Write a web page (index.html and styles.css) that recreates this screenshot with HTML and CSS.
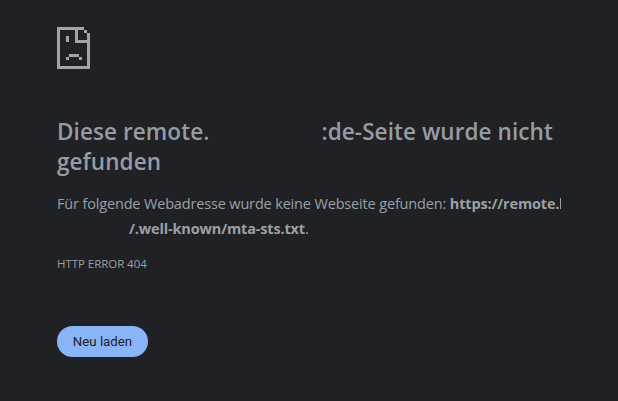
FILE: index.html
```html
<!DOCTYPE html>
<html lang="de">
<head>
<meta charset="utf-8">
<title>Seite nicht gefunden</title>
<link rel="stylesheet" href="styles.css">
</head>
<body>
<main class="page">
  <svg class="icon" width="33" height="42" viewBox="0 0 33 42" aria-hidden="true">
    <path class="icon-fill" d="M0 0H27V3H30V6H33V42H0ZM3 3V39H30V16H18V3ZM21 3V13H30V6H27V3Z" fill-rule="evenodd"/>
    <rect class="icon-fill" x="9" y="9" width="3" height="6"/>
    <path class="icon-fill" d="M12 27H22V30H25V33H22V30H12V33H9V30H12Z"/>
  </svg>
  <h1 class="title"><span>Diese remote.</span><span class="redact redact-title"></span><span>:de-Seite wurde nicht</span> <span>gefunden</span></h1>
  <p class="desc">Für folgende Webadresse wurde keine Webseite gefunden: <strong>https://remote.<span class="cut"></span><br><span class="redact redact-url"></span>/.well-known/mta-sts.txt</strong>.</p>
  <div class="code">HTTP ERROR 404</div>
  <button class="reload" type="button">Neu laden</button>
</main>
</body>
</html>
```
FILE: styles.css
```css
html, body {
  margin: 0;
  height: 100%;
  background: #202124;
}
.page {
  box-sizing: border-box;
  height: 401px;
  padding: 27px 57px 0;
  overflow: hidden;
  color: #9aa0a6;
  font-family: "Open Sans", "Noto Sans", sans-serif;
}
.icon {
  display: block;
}
.icon-fill {
  fill: #a4a4a4;
}
.title {
  margin: 48px 0 0;
  font-size: 22.5px;
  line-height: 30px;
  font-weight: 600;
  letter-spacing: 0.08px;
  color: #959ca3;
}
.redact {
  display: inline-block;
  height: 1px;
}
.redact-title {
  width: 112px;
}
.redact-url {
  width: 72px;
}
.desc {
  margin: 14px 0 0;
  font-size: 14.5px;
  line-height: 25px;
  letter-spacing: -0.16px;
  white-space: nowrap;
}
.desc strong {
  font-weight: 700;
}
.cut {
  display: inline-block;
  width: 1px;
  height: 11px;
  margin-left: 1px;
  background: #9aa0a6;
}
.code {
  margin-top: 15px;
  font-size: 11.5px;
  line-height: 16px;
  letter-spacing: -0.05px;
}
.reload {
  display: block;
  margin-top: 54px;
  width: 91px;
  height: 31px;
  padding: 0;
  border: 0;
  border-radius: 16px;
  background: #8ab4f8;
  color: #202124;
  font-family: Roboto, sans-serif;
  font-size: 13.25px;
}
```
